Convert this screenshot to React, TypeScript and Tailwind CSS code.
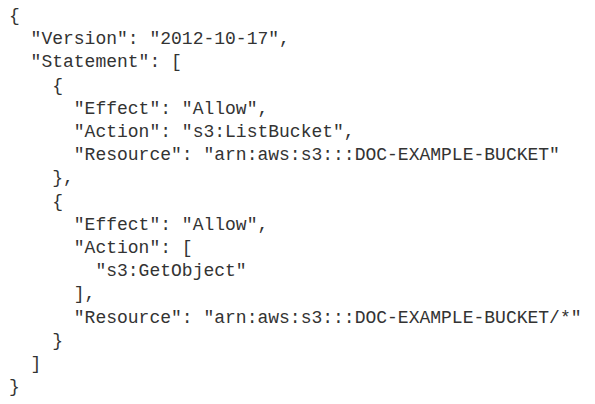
const lines = [
  '{',
  '  "Version": "2012-10-17",',
  '  "Statement": [',
  '    {',
  '      "Effect": "Allow",',
  '      "Action": "s3:ListBucket",',
  '      "Resource": "arn:aws:s3:::DOC-EXAMPLE-BUCKET"',
  '    },',
  '    {',
  '      "Effect": "Allow",',
  '      "Action": [',
  '        "s3:GetObject"',
  '      ],',
  '      "Resource": "arn:aws:s3:::DOC-EXAMPLE-BUCKET/*"',
  '    }',
  '  ]',
  '}',
]

export default function App() {
  return (
    <div className="w-[595px] h-[404px] bg-white overflow-hidden">
      <pre className="pl-[9px] pt-[5px] font-['Liberation_Mono','Courier_New',monospace] text-[18px] leading-[23.2px] text-[#333]">
        {lines.join('\n')}
      </pre>
    </div>
  )
}
